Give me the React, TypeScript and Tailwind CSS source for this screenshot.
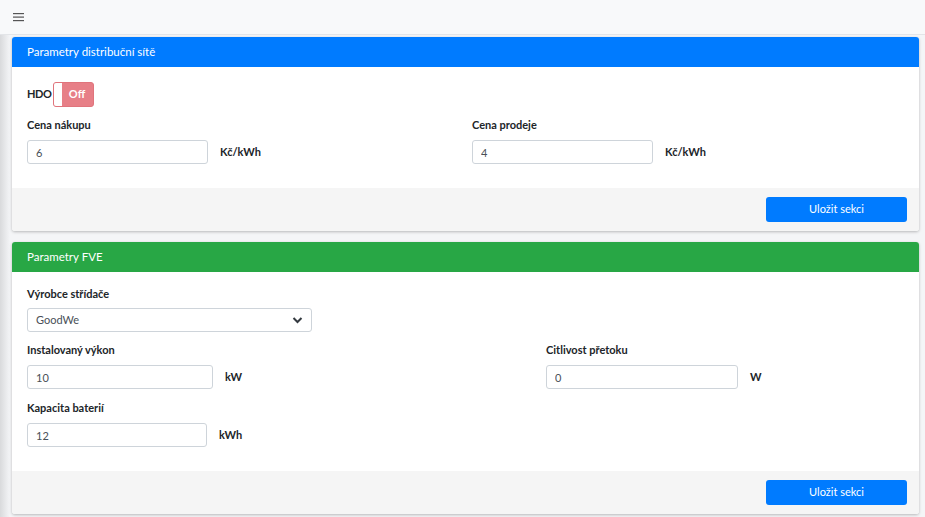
import React from 'react';

const font = { fontFamily: 'Lato, "Noto Sans", sans-serif' };

const Field: React.FC<{ label: string; value: string; unit: string; width: string; unitGap?: string }> = ({ label, value, unit, width, unitGap = 'ml-3' }) => (
  <div>
    <div className="text-[11px] font-bold text-[#212529] leading-[16px] mb-[7px]">{label}</div>
    <div className="flex items-center">
      <input
        readOnly
        value={value}
        className={`${width} h-[24px] border border-[#ced4da] rounded-[3px] px-[8px] text-[11px] text-[#495057] bg-white outline-none`}
      />
      <span className={`${unitGap} text-[11px] font-bold text-[#212529]`}>{unit}</span>
    </div>
  </div>
);

const Card: React.FC<{ title: string; color: string; children: React.ReactNode; bodyClass: string }> = ({ title, color, children, bodyClass }) => (
  <div className="bg-white rounded-[3px] shadow-[0_1px_3px_rgba(0,0,0,0.25)] overflow-hidden">
    <div className={`${color} h-[30px] px-[15px] flex items-center text-white text-[11.5px]`}>{title}</div>
    <div className={bodyClass}>{children}</div>
    <div className="bg-[#f5f5f5] h-[43px] flex items-center justify-end pr-[12px]">
      <button className="w-[141px] h-[25px] rounded-[3px] bg-[#007bff] text-white text-[11px]">Uložit sekci</button>
    </div>
  </div>
);

export default function App() {
  return (
    <div className="min-h-screen bg-[#f4f5f7] flex" style={font}>
      <div className="w-[10px] bg-gradient-to-r from-[#d9dadc] to-[#f4f5f7] shrink-0" />
      <div className="flex-1 flex flex-col">
        <div className="h-[35px] -ml-[10px] pl-[13px] bg-[#f8f9fa] border-b border-[#e3e5e8] flex items-center">
          <svg width="11" height="10" viewBox="0 0 11 10" className="text-[#555]">
            <rect x="0" y="1" width="11" height="1.2" fill="currentColor" />
            <rect x="0" y="4.5" width="11" height="1.2" fill="currentColor" />
            <rect x="0" y="8" width="11" height="1.2" fill="currentColor" />
          </svg>
        </div>
        <div className="pl-[2px] pr-[6px] pt-[2px] flex flex-col gap-[11px]">
          <Card title="Parametry distribuční sítě" color="bg-[#007bff]" bodyClass="px-[15px] pt-[15px] h-[121px]">
            <div className="flex items-center">
              <span className="text-[11px] font-bold text-[#212529] tracking-[-0.4px] mr-[1px]">HDO</span>
              <div className="w-[41px] h-[25px] rounded-[3px] bg-[#e77f87] border border-[#e0747c] flex items-center">
                <div className="w-[8px] h-[23px] bg-white rounded-l-[2px]" />
                <span className="flex-1 text-center text-white text-[11px] font-bold">Off</span>
              </div>
            </div>
            <div className="grid grid-cols-[445px_1fr] mt-[10px]">
              <Field label="Cena nákupu" value="6" unit="Kč/kWh" width="w-[181px]" />
              <Field label="Cena prodeje" value="4" unit="Kč/kWh" width="w-[181px]" />
            </div>
          </Card>
          <Card title="Parametry FVE" color="bg-[#28a745]" bodyClass="px-[15px] pt-[14px] h-[199px]">
            <div className="text-[11px] font-bold text-[#212529] leading-[16px] mb-[6px]">Výrobce střídače</div>
            <div className="w-[285px] h-[24px] border border-[#ced4da] rounded-[3px] px-[8px] flex items-center justify-between bg-white">
              <span className="text-[11px] text-[#495057]">GoodWe</span>
              <svg width="11" height="8" viewBox="0 0 11 8">
                <path d="M1.5 2 L5.5 6 L9.5 2" fill="none" stroke="#343a40" strokeWidth="2" />
              </svg>
            </div>
            <div className="grid grid-cols-[519px_1fr] mt-[10px]">
              <Field label="Instalovaný výkon" value="10" unit="kW" width="w-[186px]" />
              <Field label="Citlivost přetoku" value="0" unit="W" width="w-[192px]" />
            </div>
            <div className="mt-[11px]">
              <Field label="Kapacita baterií" value="12" unit="kWh" width="w-[180px]" />
            </div>
          </Card>
        </div>
      </div>
    </div>
  );
}
